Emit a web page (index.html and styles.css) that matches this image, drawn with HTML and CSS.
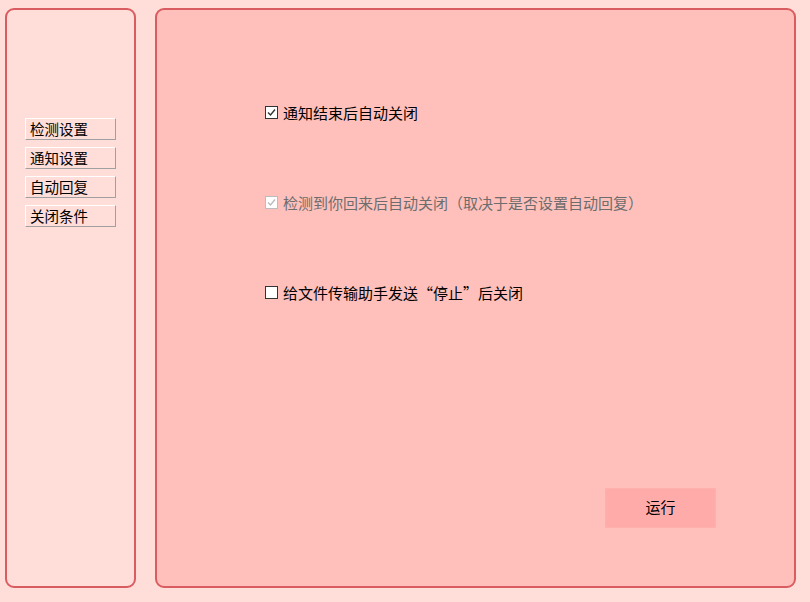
FILE: index.html
```html
<!DOCTYPE html>
<html lang="zh-CN">
<head>
    <meta charset="UTF-8">
    <meta name="viewport" content="width=device-width, initial-scale=1.0">
    <title>关闭条件</title>
    <link rel="stylesheet" href="styles.css">
</head>
<body>
    <div class="window">
        <!-- 左侧导航 -->
        <div class="sidebar">
            <button class="nav-btn">检测设置</button>
            <button class="nav-btn">通知设置</button>
            <button class="nav-btn">自动回复</button>
            <button class="nav-btn">关闭条件</button>
        </div>

        <!-- 右侧内容 -->
        <div class="content">
            <label class="option">
                <span class="box checked">
                    <svg viewBox="0 0 13 13" width="13" height="13"><path d="M3 6.5 L5.5 9 L10 3.5" fill="none" stroke="#333" stroke-width="1.4"/></svg>
                </span>
                通知结束后自动关闭
            </label>
            <label class="option disabled">
                <span class="box checked">
                    <svg viewBox="0 0 13 13" width="13" height="13"><path d="M3 6.5 L5.5 9 L10 3.5" fill="none" stroke="#bbb" stroke-width="1.4"/></svg>
                </span>
                检测到你回来后自动关闭（取决于是否设置自动回复）
            </label>
            <label class="option">
                <span class="box"></span>
                给文件传输助手发送“停止”后关闭
            </label>

            <button class="run-btn">运行</button>
        </div>
    </div>
</body>
</html>
```

FILE: styles.css
```css
body {
    margin: 0;
    background-color: #ffddd8;
    font-family: "Noto Sans CJK SC", "Noto Sans", sans-serif;
}
.window {
    display: flex;
    height: 602px;
    box-sizing: border-box;
    padding: 8px 14px 14px 5px;
    gap: 19px;
}
.sidebar {
    width: 131px;
    box-sizing: border-box;
    border: 2px solid #d95c60;
    border-radius: 9px;
    padding: 108px 0 0 18px;
    display: flex;
    flex-direction: column;
    gap: 7px;
}
.nav-btn {
    width: 91px;
    height: 22px;
    padding: 0 0 1px 4px;
    text-align: left;
    font-family: inherit;
    font-size: 14.5px;
    line-height: 18px;
    color: #000;
    background-color: #ffddd8;
    border-top: 1px solid #fff;
    border-left: 1px solid #fff;
    border-right: 1px solid #a0a0a0;
    border-bottom: 1px solid #a0a0a0;
}
.content {
    flex: 1;
    box-sizing: border-box;
    border: 2px solid #d95c60;
    border-radius: 9px;
    background-color: #ffc0bb;
    padding: 91px 78px 58px 108px;
    display: flex;
    flex-direction: column;
    gap: 68px;
}
.option {
    display: flex;
    align-items: center;
    height: 22px;
    gap: 5px;
    font-size: 15px;
    color: #000;
}
.option.disabled {
    color: #6d6d6d;
}
.box {
    width: 11px;
    height: 11px;
    border: 1px solid #333;
    background-color: #fff;
    display: flex;
}
.box svg {
    margin: -1px;
}
.disabled .box {
    border-color: #bcbcbc;
}
.run-btn {
    margin-top: auto;
    align-self: flex-end;
    width: 111px;
    height: 40px;
    padding: 0 0 4px;
    border: 1px solid #ffb0ad;
    background-color: #ffabaa;
    font-family: inherit;
    font-size: 15px;
    color: #000;
}
```
